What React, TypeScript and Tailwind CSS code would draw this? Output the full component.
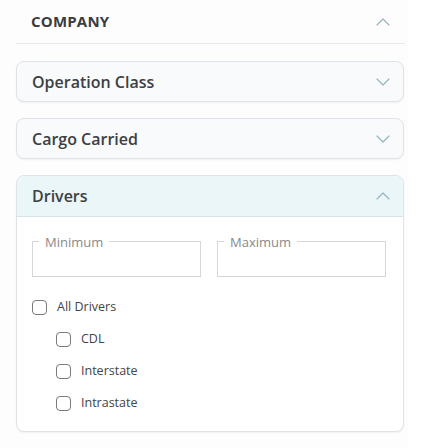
import { ChevronDown, ChevronUp } from 'lucide-react'

const font = { fontFamily: '"Open Sans", "Noto Sans", sans-serif' }

function Card({ title }: { title: string }) {
  return (
    <div className="flex h-[41px] items-center justify-between rounded-lg border border-[#dfe3e8] bg-[#f8fafc] pl-[15px] pr-[8px] shadow-[0_1px_2px_rgba(0,0,0,0.05)]">
      <span className="text-[16px] font-semibold text-[#3d3f42]">{title}</span>
      <ChevronDown size={24} strokeWidth={1.1} className="text-[#8fb3bc]" />
    </div>
  )
}

function Field({ label }: { label: string }) {
  return (
    <div className="relative h-[36px] flex-1 border border-[#d6d6d6] bg-white">
      <span className="absolute -top-[8px] left-[6px] bg-white px-[6px] text-[13px] leading-[16px] text-[#8a8a8a]">{label}</span>
    </div>
  )
}

function Check({ label, indent }: { label: string; indent?: boolean }) {
  return (
    <label className={`flex h-[32px] items-center gap-[10px] ${indent ? 'pl-[24px]' : ''}`}>
      <span className="h-[15px] w-[15px] rounded-[4px] border border-[#7a7a7a] bg-white" />
      <span className="text-[12.5px] text-[#444]">{label}</span>
    </label>
  )
}

export default function App() {
  return (
    <div className="flex h-[448px] w-[422px] bg-white" style={font}>
      <div className="w-[408px] bg-[#fdfdfd] pl-4 pr-[3px]">
        <div className="flex h-[44px] items-center justify-between border-b border-[#e6e8ea] pl-[15px] pr-[10px]">
          <span className="text-[15px] font-bold tracking-[0.2px] text-[#3a3c3f]">COMPANY</span>
          <ChevronUp size={24} strokeWidth={1.1} className="text-[#8fb3bc]" />
        </div>
        <div className="mt-[17px] flex w-[388px] flex-col gap-[16px]">
          <Card title="Operation Class" />
          <Card title="Cargo Carried" />
          <div className="overflow-hidden rounded-lg border border-[#dfe3e8] bg-white shadow-[0_1px_2px_rgba(0,0,0,0.05)]">
            <div className="flex h-[41px] items-center justify-between border-b border-[#d7e3e6] bg-[#eaf6f8] pl-[15px] pr-[8px]">
              <span className="text-[16px] font-semibold text-[#3d3f42]">Drivers</span>
              <ChevronUp size={24} strokeWidth={1.1} className="text-[#8fb3bc]" />
            </div>
            <div className="px-[15px] pb-[12px] pt-[24px]">
              <div className="flex gap-[16px] pr-[2px]">
                <Field label="Minimum" />
                <Field label="Maximum" />
              </div>
              <div className="mt-[14px] flex flex-col">
                <Check label="All Drivers" />
                <Check label="CDL" indent />
                <Check label="Interstate" indent />
                <Check label="Intrastate" indent />
              </div>
            </div>
          </div>
        </div>
      </div>
    </div>
  )
}
